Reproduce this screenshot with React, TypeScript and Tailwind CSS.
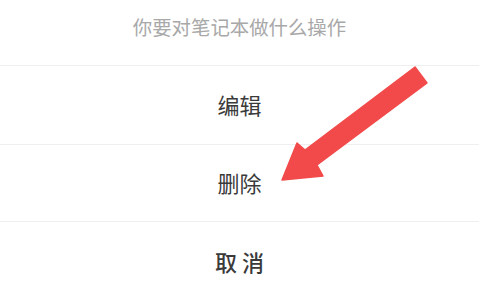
const font = {
  fontFamily: '"Noto Sans CJK SC", "Noto Sans", sans-serif',
};

function ActionRow({ label, bold, height }: { label: string; bold?: boolean; height: string }) {
  return (
    <button
      className={`w-full flex items-center justify-center border-t border-[#efefef] text-[22px] leading-none text-[#3a3a3a] pb-[3px] ${height} ${
        bold ? "font-medium" : "font-normal"
      }`}
    >
      {label}
    </button>
  );
}

function Arrow() {
  return (
    <svg
      className="absolute left-0 top-0 pointer-events-none"
      width={479}
      height={295}
      viewBox="0 0 479 295"
    >
      <polygon
        points="415,67 427,83 317,165 323,176 282,180 297,143 305,150"
        fill="#f24a4a"
        stroke="#f24a4a"
        strokeWidth={1.5}
        strokeLinejoin="round"
      />
    </svg>
  );
}

export default function App() {
  return (
    <div className="relative w-[479px] h-[295px] overflow-hidden bg-white" style={font}>
      <div className="flex flex-col">
        <div className="h-[65px] flex justify-center pt-[13px]">
          <p className="text-[19.4px] leading-[28px] text-[#a8a8a8]">你要对笔记本做什么操作</p>
        </div>
        <ActionRow label="编辑" height="h-[79px]" />
        <ActionRow label="删除" height="h-[77px]" />
        <ActionRow label="取 消" bold height="h-[82px]" />
      </div>
      <Arrow />
    </div>
  );
}
